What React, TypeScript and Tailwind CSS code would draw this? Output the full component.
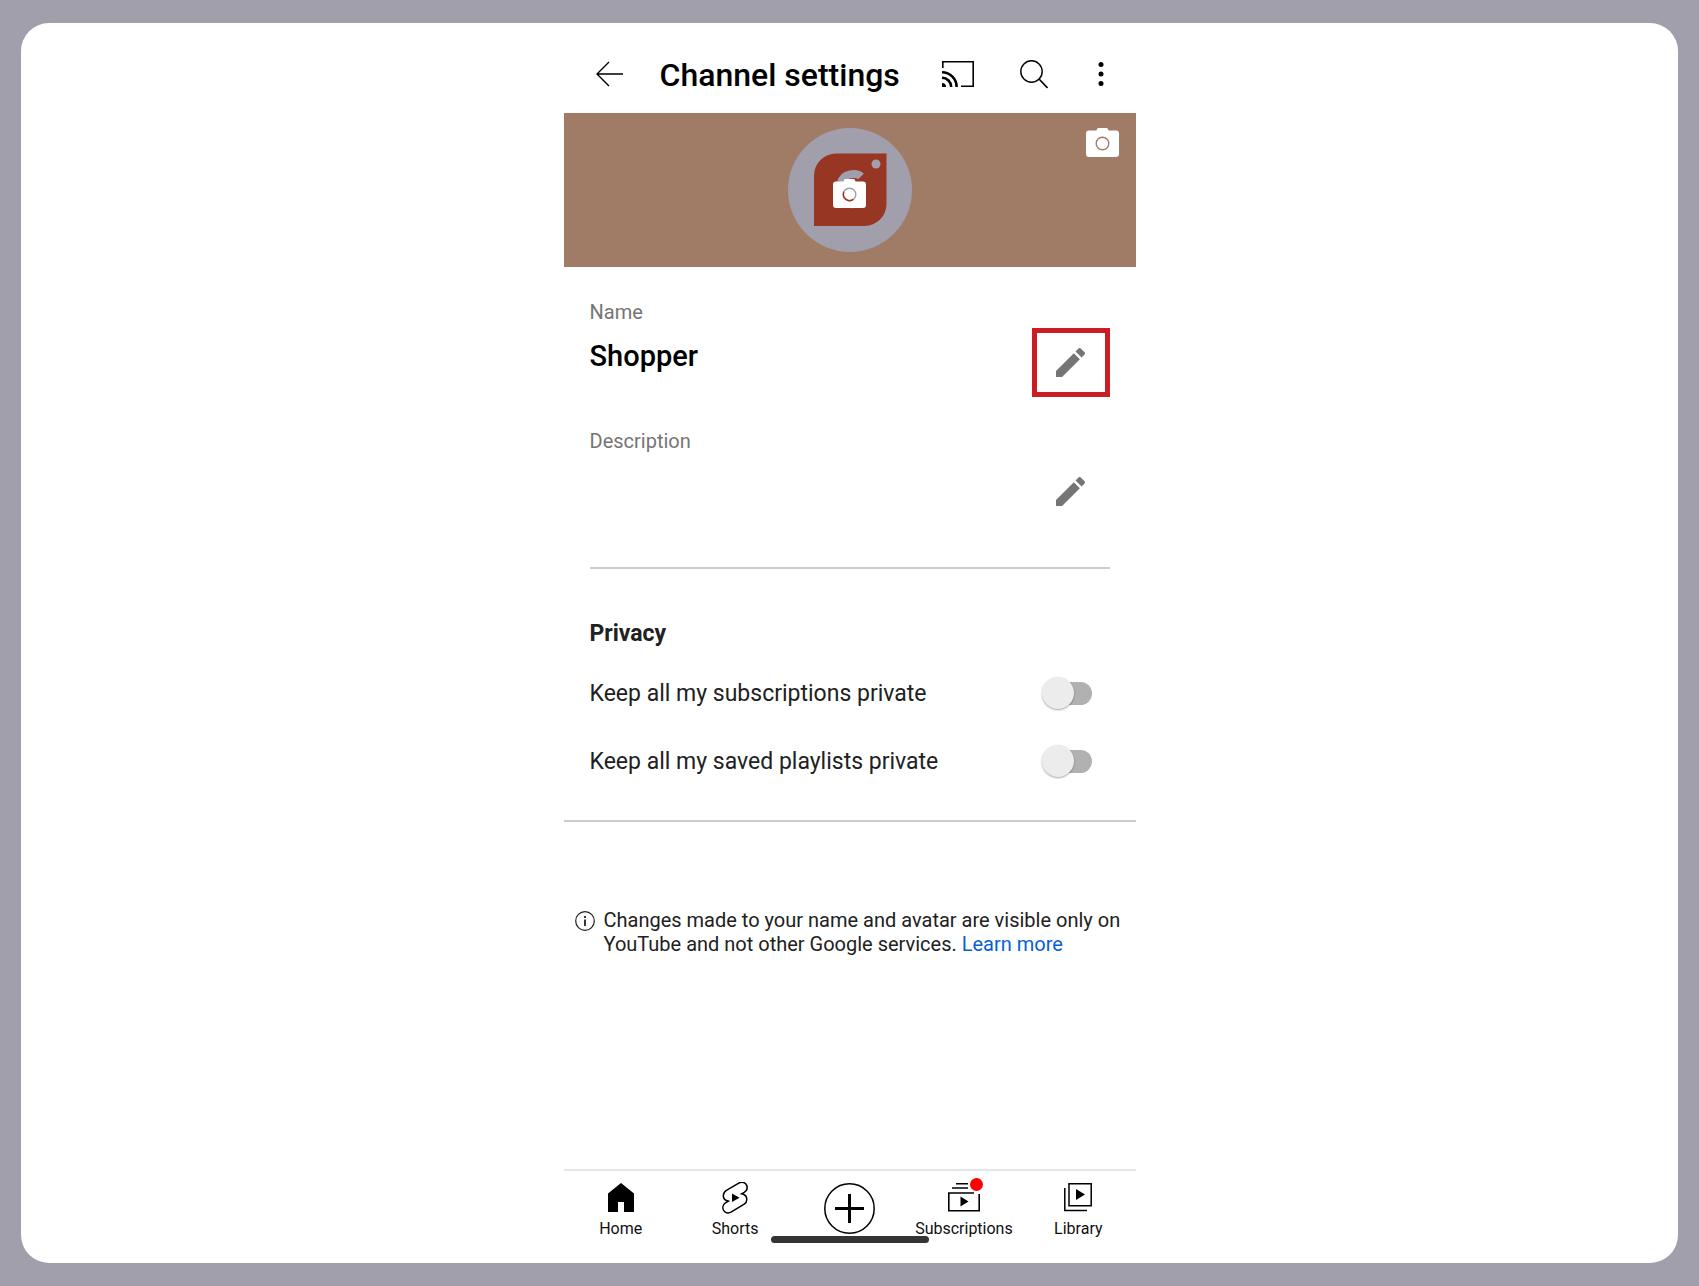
import { useState, type ReactNode } from "react";

function BackIcon() {
  return (
    <svg width="28" height="26" viewBox="0 0 28 26" fill="none" stroke="#000" strokeWidth="1.4">
      <path d="M27 13H1M13 1L1 13l12 12" />
    </svg>
  );
}

function CastIcon() {
  return (
    <svg width="32" height="26" viewBox="0 0 32 26" fill="none" stroke="#000">
      <path d="M.8 7V.8h30.4v24.4H19" strokeWidth="1.6" />
      <path d="M0 11.2A14.6 14.6 0 0 1 14.6 26M0 16.8A9.2 9.2 0 0 1 9.2 26" strokeWidth="2.6" />
      <path d="M0 22a4 4 0 0 1 4 4H0z" fill="#000" stroke="none" />
    </svg>
  );
}

function SearchIcon() {
  return (
    <svg width="28" height="29" viewBox="0 0 28 29" fill="none" stroke="#000" strokeWidth="1.4">
      <circle cx="11.5" cy="11.5" r="10.7" />
      <path d="M19 19l8.5 9" strokeWidth="1.7" />
    </svg>
  );
}

function DotsIcon() {
  return (
    <svg width="6" height="26" viewBox="0 0 6 26">
      <circle cx="3" cy="3.5" r="2.5" />
      <circle cx="3" cy="13" r="2.5" />
      <circle cx="3" cy="22.5" r="2.5" />
    </svg>
  );
}

function CameraIcon({ ring }: { ring: ReactNode }) {
  return (
    <svg width="33" height="29" viewBox="0 0 33 29">
      <path
        d="M3 2.5h7.5C11 .8 11.5 0 12.5 0h8c1 0 1.5.8 2 2.5H30a3 3 0 0 1 3 3V26a3 3 0 0 1-3 3H3a3 3 0 0 1-3-3V5.5a3 3 0 0 1 3-3z"
        fill="#fff"
      />
      {ring}
    </svg>
  );
}

function AvatarLogo() {
  return (
    <svg width="124" height="124" viewBox="0 0 124 124">
      <circle cx="62" cy="62" r="62" fill="#a19fac" />
      <path d="M48 25.5h50.5V76a22 22 0 0 1-22 22H26V47.5a22 22 0 0 1 22-22z" fill="#983624" />
      <circle cx="88" cy="36" r="4.5" fill="#a19fac" />
      <path d="M73 48.5C69 44.5 55 44.500 53 55v12c1 12 18 12 20 1" fill="none" stroke="#a19fac" strokeWidth="8" />
    </svg>
  );
}

function PencilIcon() {
  return (
    <svg width="29" height="29" viewBox="3 3 18 18" fill="#757575">
      <path d="M3 17.25V21h3.75L17.81 9.94l-3.75-3.75L3 17.25zM20.71 7.04a1 1 0 0 0 0-1.41l-2.34-2.34a1 1 0 0 0-1.41 0l-1.83 1.83 3.75 3.75 1.83-1.83z" />
    </svg>
  );
}

function InfoIcon() {
  return (
    <svg width="20" height="20" viewBox="0 0 20 20" fill="none" stroke="#212121">
      <circle cx="10" cy="10" r="9.3" strokeWidth="1.2" />
      <path d="M10 8.5v6.5M10 5v2" strokeWidth="1.8" />
    </svg>
  );
}

function HomeIcon() {
  return (
    <svg width="26" height="32" viewBox="0 0 26 32">
      <path d="M13 1l13 10.5V30H16V20h-6v10H0V11.5z" />
    </svg>
  );
}

function ShortsIcon() {
  return (
    <svg width="26" height="32" viewBox="0 0 26 32">
      <path
        d="M4.8 8.2L17.2.8c3-1.4 6.3-.3 7.400 2.3 1.100 2.700.2 5.700-2.400 7.300l-2.600 1.400 2.300.7c3.600 1.800 4 7.200.3 9.700L9 30.200c-3 1.500-6.300.5-7.600-2.200-1.200-2.700-.2-5.800 2.400-7.300l2.700-1.500-2.600-.9C.2 16.300.5 10.500 4.800 8.200z"
        fill="#fff"
        stroke="#000"
        strokeWidth="1.5"
      />
      <path d="M10 11.5V20l7.5-4.200z" />
    </svg>
  );
}

function SubscriptionsIcon() {
  return (
    <svg width="32" height="32" viewBox="0 0 32 32">
      <path d="M8 1.8h12M4 6h16" stroke="#000" strokeWidth="1.4" />
      <path d="M26 11H.8v17.7h30.4V12" fill="none" stroke="#000" strokeWidth="1.6" />
      <path d="M12.5 14.5v10l8-5z" />
    </svg>
  );
}

function LibraryIcon() {
  return (
    <svg width="30" height="32" viewBox="0 0 30 32">
      <path d="M6 1.8h22.200v22H6zM1.800 6v22.500H24" fill="none" stroke="#000" strokeWidth="1.5" />
      <path d="M13 7v11l9-5.5z" />
    </svg>
  );
}

const fields = [
  { label: "Name", value: "Shopper", highlighted: true },
  { label: "Description", value: "", highlighted: false },
];

const privacyOptions = [
  { id: "subscriptions", label: "Keep all my subscriptions private" },
  { id: "playlists", label: "Keep all my saved playlists private" },
];

function Toggle({ id, label }: { id: string; label: string }) {
  const [on, setOn] = useState(false);

  return (
    <div className="flex h-[68px] items-center justify-between pr-[18px]">
      <label htmlFor={id} className="pt-[2px] text-[23px] leading-7">
        {label}
      </label>
      <span className="relative flex h-8 w-[50px] items-center">
        <input
          id={id}
          type="checkbox"
          role="switch"
          checked={on}
          onChange={() => setOn(!on)}
          className="peer ml-1 h-[23px] w-full cursor-pointer appearance-none rounded-full bg-[#b1b1b1] checked:bg-blue-300"
        />
        <span className="pointer-events-none absolute left-0 size-8 rounded-full bg-[#ececec] shadow-[0_1px_2px_rgba(0,0,0,0.35)] peer-checked:left-auto peer-checked:right-0 peer-checked:bg-blue-600" />
      </span>
    </div>
  );
}

function NavItem({ label, icon }: { label: string; icon: ReactNode }) {
  return (
    <a href="#" className="flex flex-1 basis-0 flex-col items-center gap-[6px] pt-[11px] text-[16px] leading-[18px] text-[#0f0f0f]">
      {icon}
      {label}
    </a>
  );
}

export default function App() {
  return (
    <div className="flex min-h-screen bg-[#a19fac] px-[21px] py-[23px] font-['Roboto',sans-serif] text-[#212121]">
      <div className="flex flex-1 justify-center rounded-[28px] bg-white">
        <div className="flex w-full max-w-[572px] flex-col">
          <header className="flex h-[90px] items-center pt-3 pr-8 pl-8">
            <button aria-label="Back">
              <BackIcon />
            </button>
            <h1 className="flex-1 pt-[2px] pl-9 text-[32px] leading-[38px] font-medium text-black">
              Channel settings
            </h1>
            <div className="flex items-center">
              <button aria-label="Cast" className="mr-[46px]">
                <CastIcon />
              </button>
              <button aria-label="Search" className="mr-[50px]">
                <SearchIcon />
              </button>
              <button aria-label="More options">
                <DotsIcon />
              </button>
            </div>
          </header>

          <div className="relative flex h-[154px] items-center justify-center bg-[#a07c66]">
            <button aria-label="Change avatar" className="relative">
              <AvatarLogo />
              <span className="absolute inset-x-0 top-[51px] flex justify-center">
                <CameraIcon
                  ring={
                    <g fill="none" strokeWidth="1.4">
                      <circle cx="16.5" cy="15.5" r="6.3" stroke="#a19fac" />
                      <path d="M10.9 12.8a6.300 6.300 0 0 0 9.400 7.600" stroke="#983624" />
                    </g>
                  }
                />
              </span>
            </button>
            <button aria-label="Change banner" className="absolute top-[15px] right-[17px]">
              <CameraIcon
                ring={<circle cx="16.5" cy="15.5" r="6.3" fill="none" stroke="#a07c66" strokeWidth="1.4" />}
              />
            </button>
          </div>

          <main>
            <div className="mx-[26px] flex flex-col gap-8 border-b-2 border-[#cccccc] pt-[33px] pb-[41px]">
              {fields.map((field) => (
                <section key={field.label}>
                  <h2 className="mb-1 text-[20px] leading-6 text-[#757575]">{field.label}</h2>
                  <div className="flex items-start justify-between">
                    <p className="pt-[11px] text-[29px] leading-[34px] font-medium text-black">
                      {field.value}
                    </p>
                    <button
                      aria-label={`Edit ${field.label.toLowerCase()}`}
                      className={
                        field.highlighted
                          ? "flex h-[69px] w-[78px] items-center justify-center border-5 border-[#cd1c24]"
                          : "flex h-[69px] w-[78px] items-center justify-center"
                      }
                    >
                      <PencilIcon />
                    </button>
                  </div>
                </section>
              ))}
            </div>

            <section className="border-b-2 border-[#cccccc] px-[26px] pt-[51px] pb-[25px]">
              <h2 className="mb-[11px] text-[23px] leading-7 font-bold">Privacy</h2>
              {privacyOptions.map((option) => (
                <Toggle key={option.id} id={option.id} label={option.label} />
              ))}
            </section>

            <div className="mt-[86px] mb-8 flex gap-[9px] pl-[11px]">
              <span className="shrink-0 pt-[3px]">
                <InfoIcon />
              </span>
              <p className="text-[20px] leading-6">
                Changes made to your name and avatar are visible only on YouTube and not other Google services.{" "}
                <a href="#" className="text-[#065fd4]">
                  Learn more
                </a>
              </p>
            </div>
          </main>

          <nav className="relative mt-auto flex h-[94px] border-t-2 border-[#e5e5e5]">
            <NavItem label="Home" icon={<HomeIcon />} />
            <NavItem label="Shorts" icon={<ShortsIcon />} />
            <div className="flex flex-1 basis-0 items-start justify-center pt-3">
              <button aria-label="Create">
                <svg width="51" height="51" viewBox="0 0 51 51" fill="none" stroke="#000">
                  <circle cx="25.5" cy="25.5" r="24.7" strokeWidth="1.5" />
                  <path d="M25.5 11v29M11 25.5h29" strokeWidth="3" />
                </svg>
              </button>
            </div>
            <NavItem
              label="Subscriptions"
              icon={
                <span className="relative">
                  <SubscriptionsIcon />
                  <span className="absolute -top-1 -right-[3px] size-[13px] rounded-full bg-[#ff0000]" />
                </span>
              }
            />
            <NavItem label="Library" icon={<LibraryIcon />} />
            <div className="absolute bottom-5 left-1/2 h-[7px] w-[158px] -translate-x-1/2 rounded-full bg-[#343434]" />
          </nav>
        </div>
      </div>
    </div>
  );
}
